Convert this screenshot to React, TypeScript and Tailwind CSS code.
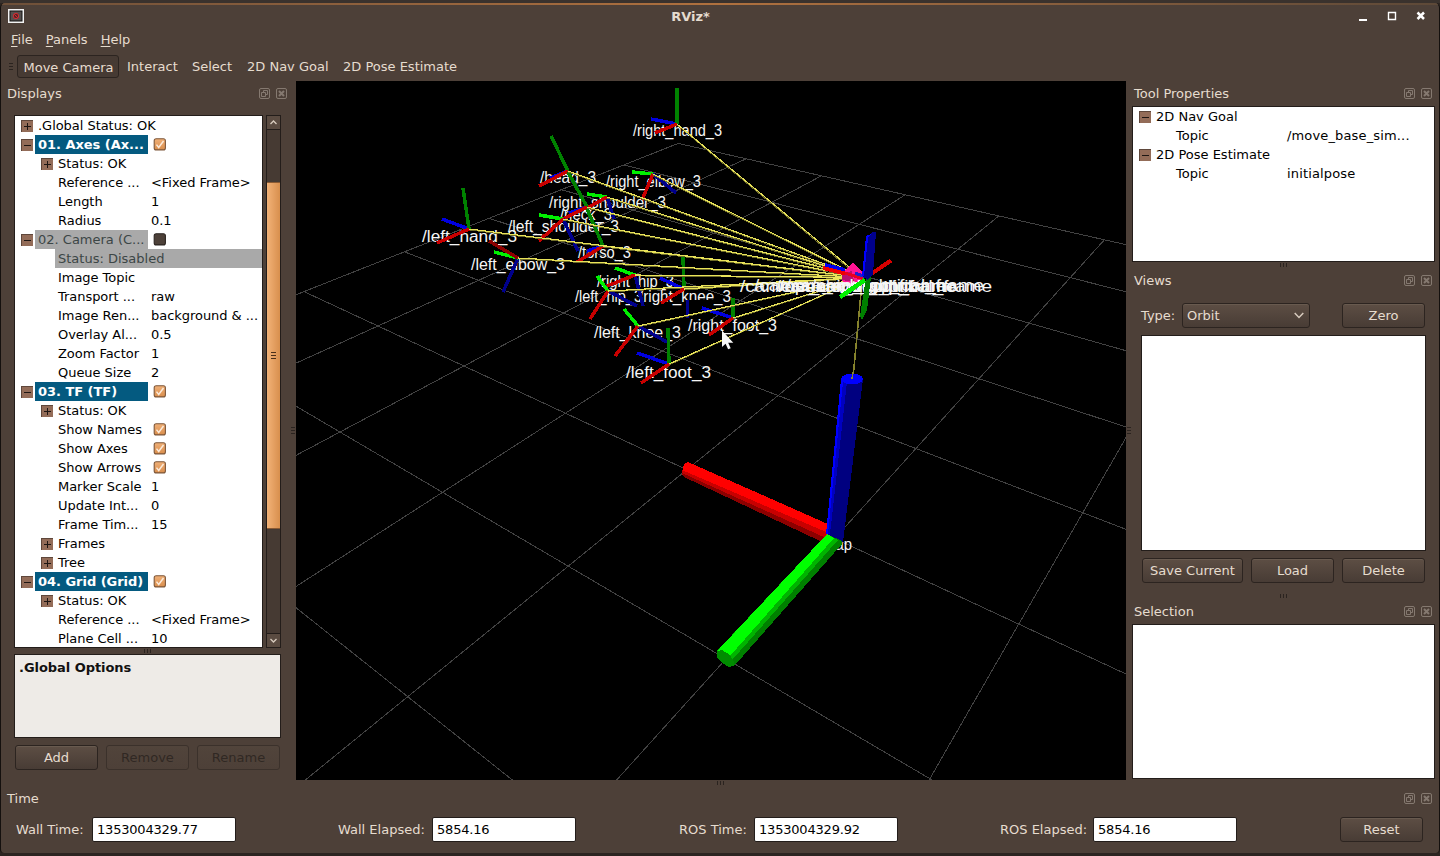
import React from "react";

type Pt = [number, number];

/* ---------- small widgets ---------- */

function Expander({ open }: { open: boolean }) {
  return (
    <svg width="12" height="12" viewBox="0 0 12 12" className="shrink-0" shapeRendering="crispEdges">
      <rect width="12" height="12" fill="#5f473b" />
      <rect x="1" y="1" width="11" height="11" fill="#936c58" />
      <rect x="3" y="6" width="7" height="1" fill="#1d1512" />
      {!open && <rect x="6" y="3" width="1" height="7" fill="#1d1512" />}
    </svg>
  );
}

function Check({ on }: { on: boolean }) {
  return (
    <svg width="13" height="13" viewBox="0 0 13 13" className="ml-[5px] shrink-0">
      <defs>
        <linearGradient id="chk" x1="0" y1="0" x2="0" y2="1">
          <stop offset="0" stopColor="#f0b078" />
          <stop offset="1" stopColor="#d98e4c" />
        </linearGradient>
      </defs>
      <rect x="1.2" y="0.7" width="11.2" height="11.2" rx="2" fill={on ? "url(#chk)" : "#4d4139"} stroke={on ? "#7d573a" : "#2b2420"} strokeWidth="1.1" />
      {on && <path d="M3.5 6.6 5.7 9.4 10.5 3" fill="none" stroke="#fbeada" strokeWidth="1.5" />}
    </svg>
  );
}

function DockButtons() {
  return (
    <svg width="28" height="11" viewBox="0 0 28 11" fill="none" stroke="#857970" strokeWidth="1">
      <rect x="0.5" y="0.5" width="10" height="10" rx="1.5" />
      <path d="M4.5 4.5V2.5H8.5V6.5H6.5M2.5 4.5H6.5V8.5H2.5Z" />
      <rect x="17.5" y="0.5" width="10" height="10" rx="1.5" />
      <path d="M20 3l5 5M25 3l-5 5" strokeWidth="2" />
    </svg>
  );
}

function DockTitle({ text }: { text: string }) {
  return (
    <div className="flex h-[25px] shrink-0 items-center justify-between">
      <span>{text}</span>
      <DockButtons />
    </div>
  );
}

function Grip({ vertical = false }: { vertical?: boolean }) {
  return (
    <svg width={vertical ? 4 : 7} height={vertical ? 7 : 4} className="shrink-0" fill="#2a231f" shapeRendering="crispEdges">
      {[0, 3, 6].map((n) =>
        vertical ? <rect key={n} x="0" y={n} width="4" height="1" /> : <rect key={n} x={n} y="0" width="1" height="4" />
      )}
    </svg>
  );
}

function Button({ label, width = "w-[83px]", disabled = false }: { label: string; width?: string; disabled?: boolean }) {
  const look = disabled
    ? "border-[#3b312b] text-[#302823] from-[#51443b] to-[#4d4038]"
    : "border-[#2c2420] text-[#e6dccf] from-[#5d4e44] to-[#483c35] shadow-[inset_0_1px_0_#685a4f]";
  return (
    <button className={`${width} ${look} flex h-[25px] shrink-0 items-center justify-center rounded-[3px] border bg-gradient-to-b`}>
      {label}
    </button>
  );
}

/* ---------- displays tree ---------- */

type Row = {
  name: string;
  level?: number;
  mark?: "+" | "-";
  value?: string;
  check?: boolean;
  look?: "head" | "off" | "offRow";
};

const rows: Row[] = [
  { name: ".Global Status: OK", mark: "+" },
  { name: "01. Axes (Ax...", mark: "-", look: "head", check: true },
  { name: "Status: OK", level: 1, mark: "+" },
  { name: "Reference ...", level: 1, value: "<Fixed Frame>" },
  { name: "Length", level: 1, value: "1" },
  { name: "Radius", level: 1, value: "0.1" },
  { name: "02. Camera (C...", mark: "-", look: "off", check: false },
  { name: "Status: Disabled", level: 1, look: "offRow" },
  { name: "Image Topic", level: 1 },
  { name: "Transport ...", level: 1, value: "raw" },
  { name: "Image Ren...", level: 1, value: "background & ..." },
  { name: "Overlay Al...", level: 1, value: "0.5" },
  { name: "Zoom Factor", level: 1, value: "1" },
  { name: "Queue Size", level: 1, value: "2" },
  { name: "03. TF (TF)", mark: "-", look: "head", check: true },
  { name: "Status: OK", level: 1, mark: "+" },
  { name: "Show Names", level: 1, check: true },
  { name: "Show Axes", level: 1, check: true },
  { name: "Show Arrows", level: 1, check: true },
  { name: "Marker Scale", level: 1, value: "1" },
  { name: "Update Int...", level: 1, value: "0" },
  { name: "Frame Tim...", level: 1, value: "15" },
  { name: "Frames", level: 1, mark: "+" },
  { name: "Tree", level: 1, mark: "+" },
  { name: "04. Grid (Grid)", mark: "-", look: "head", check: true },
  { name: "Status: OK", level: 1, mark: "+" },
  { name: "Reference ...", level: 1, value: "<Fixed Frame>" },
  { name: "Plane Cell ...", level: 1, value: "10" },
];

function TreeRow({ row }: { row: Row }) {
  const cell =
    row.look === "head"
      ? "bg-[#045a80] font-bold text-white tracking-[-0.03px]"
      : row.look === "off"
        ? "bg-[#a9a9a9] text-[#3c4646]"
        : row.look === "offRow"
          ? "bg-[#a9a9a9] text-[#3c4646] grow"
          : "tracking-[-0.04px]";
  return (
    <div className={`${row.level ? "pl-[26px]" : "pl-[6px]"} flex h-[19px] shrink-0 items-center`}>
      <span className="mt-px flex w-[14px] shrink-0">{row.mark && <Expander open={row.mark === "-"} />}</span>
      <span className={`${cell} ${row.level ? "min-w-[93px]" : "min-w-[113px]"} flex h-full shrink-0 items-center whitespace-nowrap pl-[3px]`}>
        {row.name}
      </span>
      {row.value && <span className="whitespace-nowrap pl-[3px] tracking-[-0.04px]">{row.value}</span>}
      {row.check !== undefined && <Check on={row.check} />}
    </div>
  );
}

function Scrollbar() {
  return (
    <div className="flex w-[15px] shrink-0 flex-col border border-[#231d1a] bg-[#463a33]">
      <div className="flex h-[14px] items-center justify-center border-b border-[#231d1a] bg-[#5a4b41]">
        <svg width="7" height="5" fill="none" stroke="#d8ccbf" strokeWidth="1.3"><path d="M0.5 4 3.5 1 6.5 4" /></svg>
      </div>
      <div className="h-[52px]" />
      <div className="flex h-[347px] items-center justify-center border-y border-[#8a5a33] bg-gradient-to-r from-[#f2b277] to-[#d88f4d]">
        <svg width="5" height="7" fill="#4a2f1a" shapeRendering="crispEdges">
          <rect width="5" height="1" /><rect y="3" width="5" height="1" /><rect y="6" width="5" height="1" />
        </svg>
      </div>
      <div className="grow" />
      <div className="flex h-[14px] items-center justify-center border-t border-[#231d1a] bg-[#5a4b41]">
        <svg width="7" height="5" fill="none" stroke="#d8ccbf" strokeWidth="1.3"><path d="M0.5 1 3.5 4 6.5 1" /></svg>
      </div>
    </div>
  );
}

function DisplaysPanel() {
  return (
    <div className="flex w-[296px] shrink-0">
      <div className="flex w-[288px] flex-col">
        <div className="pl-[7px] pr-px"><DockTitle text="Displays" /></div>
        <div className="ml-[14px] mt-[9px] flex h-[533px] gap-[3px]">
          <div className="flex w-[249px] shrink-0 flex-col overflow-hidden border border-[#231d1a] bg-white text-black">
            {rows.map((r, i) => <TreeRow key={i} row={r} />)}
          </div>
          <Scrollbar />
        </div>
        <div className="flex h-[6px] items-center justify-center pl-[7px]"><Grip /></div>
        <div className="ml-[14px] h-[84px] w-[267px] border border-[#231d1a] bg-[#eeebe7] px-[4px] py-[3px] font-bold tracking-[-0.05px] text-[#111]">.Global Options</div>
        <div className="ml-[15px] mt-[7px] flex gap-2">
          <Button label="Add" />
          <Button label="Remove" disabled />
          <Button label="Rename" disabled />
        </div>
      </div>
      <div className="flex grow items-center justify-center pl-[2px]"><Grip vertical /></div>
    </div>
  );
}

/* ---------- 3D scene ---------- */

/* Ground-plane projection: (u, v) in grid cells measured from the far corner. */
const quad: Pt[] = [[678.2, 143.4], [1104.4, 239.8], [834.7, 538.5], [304, 291.6]];

function buildGrid() {
  const [[x0, y0], [x1, y1], [x2, y2], [x3, y3]] = quad;
  const dx1 = x1 - x2, dy1 = y1 - y2, dx2 = x3 - x2, dy2 = y3 - y2;
  const sx = x0 - x1 + x2 - x3, sy = y0 - y1 + y2 - y3;
  const det = dx1 * dy2 - dx2 * dy1;
  const g = (sx * dy2 - dx2 * sy) / det;
  const h = (dx1 * sy - sx * dy1) / det;
  const at = (u: number, v: number): Pt => {
    const s = u / 5, t = v / 5, w = 1 + g * s + h * t;
    return [
      ((x1 - x0 + g * x1) * s + (x3 - x0 + h * x3) * t + x0) / w,
      ((y1 - y0 + g * y1) * s + (y3 - y0 + h * y3) * t + y0) / w,
    ];
  };
  const near = 0.12;
  const out: [Pt, Pt][] = [];
  for (let n = 0; n <= 10; n++) {
    const vMax = Math.min(10, ((near - 1 - (g * n) / 5) / h) * 5);
    const uMax = Math.min(10, ((near - 1 - (h * n) / 5) / g) * 5);
    out.push([at(n, 0), at(n, vMax)], [at(0, n), at(uMax, n)]);
  }
  return out;
}

const gridLines = buildGrid();

type Frame = { o: Pt; r?: Pt; g?: Pt; b?: Pt };

const frames: Frame[] = [
  { o: [677, 124], g: [677, 88], b: [651, 119], r: [655, 133] },
  { o: [568, 171], g: [551, 136], b: [550, 178], r: [539, 186] },
  { o: [653, 174], g: [632, 172], b: [676, 193], r: [642, 200] },
  { o: [607, 197], g: [587, 194], b: [614, 219], r: [587, 208] },
  { o: [587, 207], g: [568, 172], b: [569, 213], r: [563, 219] },
  { o: [563, 219], g: [539, 215], b: [578, 251], r: [539, 241] },
  { o: [469, 229], g: [463, 188], b: [442, 219], r: [437, 243] },
  { o: [518, 258], g: [494, 252], b: [503, 292], r: [489, 241] },
  { o: [603, 246], g: [587, 209], b: [587, 251], r: [577, 262] },
  { o: [635, 275], g: [615, 268], b: [643, 306], r: [607, 286] },
  { o: [608, 291], g: [597, 276], b: [637, 306], r: [590, 319] },
  { o: [684, 289], g: [683, 257], b: [660, 278], r: [661, 303] },
  { o: [638, 326], g: [624, 309], b: [667, 342], r: [615, 356] },
  { o: [733, 318], g: [733, 298], b: [702, 308], r: [709, 335] },
  { o: [669, 364], g: [668, 328], b: [637, 353], r: [641, 383] },
];

const labels: [string, number, number, number][] = [
  ["/right_hand_3", 633, 136, 89],
  ["/head_3", 540, 183, 56],
  ["/right_elbow_3", 606, 187, 95],
  ["/right_shoulder_3", 549, 208, 117],
  ["/neck_3", 560, 220, 52],
  ["/left_shoulder_3", 508, 232, 111],
  ["/left_hand_3", 422, 242, 95],
  ["/left_elbow_3", 471, 270, 94],
  ["/torso_3", 578, 258, 53],
  ["/right_hip_3", 597, 287, 77],
  ["/left_hip_3", 575, 302, 67],
  ["/right_knee_3", 639, 302, 92],
  ["/left_knee_3", 594, 338, 87],
  ["/right_foot_3", 688, 331, 89],
  ["/left_foot_3", 626, 378, 85],
];

const sensorLabels: [string, number, number, number][] = [
  ["/camera_depth_optical_frame", 740, 292, 252],
  ["/camera_rgb_optical_frame", 754, 291, 230],
  ["/camera_depth_frame", 776, 292, 180],
  ["/camera_rgb_frame", 786, 291, 160],
  ["/openni_depth_frame", 779, 292, 178],
  ["/camera_link", 811, 292, 106],
];

const GREENS_BRIGHT = new Set([2, 3, 5, 7, 9, 10, 12]);
const BLUES_DARK = new Set([2, 3, 5, 7, 9, 10, 12]);

function Seg({ a, b, c, w = 4 }: { a: Pt; b: Pt; c: string; w?: number }) {
  return <line x1={a[0]} y1={a[1]} x2={b[0]} y2={b[1]} stroke={c} strokeWidth={w} />;
}

function Labels({ items, size }: { items: [string, number, number, number][]; size: number }) {
  return (
    <g fill="#f6f6f6" fontSize={size} className="font-['Liberation_Sans',Arial,sans-serif]">
      {items.map(([t, x, y, w]) => (
        <text key={t} x={x} y={y} textLength={w} lengthAdjust="spacingAndGlyphs">{t}</text>
      ))}
    </g>
  );
}

function Scene() {
  return (
    <svg width="830" height="699" viewBox="296 81 830 699" className="block shrink-0 bg-black">
      <g shapeRendering="crispEdges">
        {gridLines.map(([a, b], i) => <Seg key={i} a={a} b={b} c="#424242" w={1} />)}
      </g>
      <Labels items={labels} size={16} />
      <Labels items={[["/map", 819, 550, 33]]} size={16} />
      <rect x="687" y="300" width="27" height="3" fill="#000" />
      <g shapeRendering="crispEdges">
        {frames.map((f, i) => (
          <g key={i}>
            {f.b && <Seg a={f.o} b={f.b} c={BLUES_DARK.has(i) ? "#00008c" : "#0000e0"} w={3.5} />}
            {f.g && <Seg a={f.o} b={f.g} c={GREENS_BRIGHT.has(i) ? "#00f000" : "#008200"} w={3.5} />}
            {f.r && <Seg a={f.o} b={f.r} c={i === 7 ? "#8c0000" : "#c80000"} w={3.5} />}
          </g>
        ))}
        <Seg a={[688, 300]} b={[687, 318]} c="#00008c" w={3} />
        {frames.map((f, i) => (
          <Seg key={i} a={[f.o[0], f.o[1] + 0.9]} b={[861, 278.4]} c="#6f6c28" w={1} />
        ))}
        {frames.map((f, i) => <Seg key={i} a={f.o} b={[862, 277.5]} c="#e9e35a" w={1.1} />)}
        <Seg a={[862, 282]} b={[853, 378]} c="#85822c" w={1.6} />

        {/* sensor arrow tip */}
        <polygon points="842,273 853,263 863,273 864,281 858,284 850,287 842,281" fill="#ff1493" />
        <polygon points="842,273 852,271 854,282 842,280" fill="#b80f70" />
      </g>
      <Labels items={sensorLabels} size={17} />
      <g shapeRendering="crispEdges">
        {/* sensor frame axes */}
        <polygon points="867,277 871,277 867,310 862,320 860,316 865,284" fill="#008000" />
        <Seg a={[825, 265]} b={[845, 270]} c="#0000f0" w={4} />
        <Seg a={[823, 268]} b={[845, 273.5]} c="#f00000" w={4} />
        <Seg a={[845, 273]} b={[864, 279]} c="#e80020" w={3} />
        <Seg a={[855, 273]} b={[866, 277]} c="#2020d0" w={3} />
        <Seg a={[871, 274]} b={[891, 260.5]} c="#d80000" w={4} />
        <polygon points="866,236 871,234 872,232 876,232 873,274 868,280 862,276" fill="#00008c" />
        <polygon points="866,236 871,234 868,238 864,276 862,276" fill="#0000ff" />
        <Seg a={[865, 280]} b={[840, 297]} c="#00f000" w={4.5} />

        {/* fixed frame axes */}
        <polygon points="682,472 684,464 688,462 830,525 828,541 820,541 682,475" fill="#ff0000" />
        <polygon points="682,470 826,532 828,544 820,541 682,475" fill="#c80000" />
        <polygon points="682,473 826,538 828,544 820,541 684,477" fill="#8c0000" />
        <polygon points="841,379 863,379 843,542 826,534" fill="#000080" />
        <polygon points="841,379 847,382 830,534 826,534" fill="#0000c0" />
        <polygon points="841,379 843,382 828,534 826,534" fill="#0000ff" />
        <ellipse cx="852" cy="379" rx="11" ry="5.5" fill="#0000ff" />
        <Seg a={[853, 372]} b={[852, 379]} c="#85822c" w={1.6} />
        <polygon points="717,651 827,534 842,541 842,544 735,665 729,667 722,663" fill="#008000" />
        <polygon points="717,651 827,534 838,540 733,659" fill="#00b400" />
        <polygon points="717,651 720,648 827,534 834,538 730,656 722,650" fill="#00ff00" />
        <polygon points="717,651 722,650 730,655 733,660 735,665 729,667 722,663 717,657" fill="#008c00" />
      </g>
      <path d="M722 330.5v16.5l3.6-3.3 2.5 5.6 2.6-1.1-2.5-5.4h5.1z" fill="#f8f8f8" />
    </svg>
  );
}

/* ---------- right column ---------- */

function ToolRow({ name, value, open }: { name: string; value?: string; open?: boolean }) {
  return (
    <div className="flex h-[19px] items-center pl-[6px]">
      {open && <span className="mt-px flex"><Expander open /></span>}
      <span className={`${open ? "pl-[5px]" : "w-[148px] pl-[37px]"} shrink-0 whitespace-nowrap`}>{name}</span>
      {value && <span className="tracking-[0.15px]">{value}</span>}
    </div>
  );
}

function RightColumn() {
  return (
    <div className="flex w-[314px] shrink-0 pr-[5px]">
      <div className="flex w-[6px] shrink-0 items-center justify-center"><Grip vertical /></div>
      <div className="flex w-[303px] flex-col">
        <div className="pl-[2px] pr-[3px]"><DockTitle text="Tool Properties" /></div>
        <div className="h-[156px] shrink-0 border border-[#231d1a] bg-white text-black">
          <ToolRow name="2D Nav Goal" open />
          <ToolRow name="Topic" value="/move_base_sim..." />
          <ToolRow name="2D Pose Estimate" open />
          <ToolRow name="Topic" value="initialpose" />
        </div>
        <div className="flex h-[6px] shrink-0 items-center justify-center"><Grip /></div>
        <div className="pl-[2px] pr-[3px]"><DockTitle text="Views" /></div>
        <div className="mt-[10px] flex h-[25px] shrink-0 items-center pl-[9px]">
          <span className="w-[41px]">Type:</span>
          <div className="flex h-[25px] w-[128px] items-center justify-between rounded-[3px] border border-[#2c2420] bg-gradient-to-b from-[#5d4e44] to-[#483c35] pl-1 pr-[5px] shadow-[inset_0_1px_0_#685a4f]">
            Orbit
            <svg width="10" height="7" fill="none" stroke="#d8ccbf" strokeWidth="1.5"><path d="M0.7 1 5 5.4 9.3 1" /></svg>
          </div>
          <div className="ml-[32px]"><Button label="Zero" /></div>
        </div>
        <div className="ml-[9px] mt-[7px] h-[216px] w-[285px] shrink-0 border border-[#231d1a] bg-white" />
        <div className="ml-[10px] mt-[7px] flex gap-2">
          <Button label="Save Current" width="w-[101px]" />
          <Button label="Load" />
          <Button label="Delete" />
        </div>
        <div className="mt-[10px] flex h-[6px] shrink-0 items-center justify-center"><Grip /></div>
        <div className="pl-[2px] pr-[3px]"><DockTitle text="Selection" /></div>
        <div className="h-[155px] shrink-0 border border-[#231d1a] bg-white" />
      </div>
    </div>
  );
}

/* ---------- time bar ---------- */

function TimeField({ label, value, width }: { label: string; value: string; width: string }) {
  return (
    <div className={`${width} flex shrink-0 items-center justify-between`}>
      <span className="whitespace-nowrap">{label}</span>
      <div className="flex h-[25px] w-[144px] items-center rounded-[2px] border border-[#231d1a] bg-white pl-1 tracking-[-0.2px] text-black">{value}</div>
    </div>
  );
}

function Mnemonic({ text }: { text: string }) {
  return (
    <span>
      <span className="underline underline-offset-2">{text[0]}</span>
      {text.slice(1)}
    </span>
  );
}

export default function App() {
  return (
    <div className="flex h-[856px] w-[1440px] flex-col overflow-hidden bg-[#2c2521] font-['DejaVu_Sans',sans-serif] text-[13px] leading-[19px] text-[#e6dccf]">
      <div className="h-[3px] shrink-0 bg-[#3a322d]" />
      <div className="flex h-[850px] shrink-0 flex-col overflow-hidden rounded-t-[5px] rounded-b-[4px] border-x border-[#14100e] bg-[#4d4038]">
        <div className="h-[2px] shrink-0 bg-gradient-to-r from-[#6e5039] via-[#b0713e] to-[#5d4938]" />
        <div className="flex h-[22px] shrink-0 items-center pl-[7px] pr-[14px]">
          <svg width="16" height="14" viewBox="0 0 16 14">
            <rect x="0.75" y="0.75" width="14.5" height="12.5" fill="#111" stroke="#f2f2f2" strokeWidth="1.5" />
            <rect x="2.5" y="2.5" width="11" height="9" fill="#55504e" />
            <circle cx="8" cy="7" r="2.7" fill="#5a2424" stroke="#d02c34" />
            <path d="M6.2 5.2 9.8 8.8" stroke="#d02c34" />
          </svg>
          <div className="grow pr-[2px] text-center font-bold">RViz*</div>
          <svg width="66" height="12" viewBox="0 0 66 12" fill="none" stroke="#fff">
            <path d="M0 10H8" strokeWidth="2" />
            <path d="M29.5 2.5h7v7h-7zM29 2.5h8" strokeWidth="1.4" />
            <path d="M58.5 2.5 65 9M65 2.5 58.5 9" strokeWidth="2.5" />
          </svg>
        </div>
        <div className="flex h-[24px] shrink-0 items-center gap-[13px] pl-[10px]">
          <Mnemonic text="File" />
          <Mnemonic text="Panels" />
          <Mnemonic text="Help" />
        </div>
        <div className="flex h-[30px] shrink-0 items-center pl-[8px]">
          <Grip vertical />
          <div className="ml-1 mt-px flex h-[23px] w-[102px] items-center justify-center rounded-[3px] border border-[#2c2420] bg-[#463a33] pl-px pt-[2px]">Move Camera</div>
          <span className="ml-[8px] w-[65px]">Interact</span>
          <span className="w-[55px]">Select</span>
          <span className="w-[96px]">2D Nav Goal</span>
          <span>2D Pose Estimate</span>
        </div>
        <div className="-mx-px flex h-[699px] shrink-0">
          <DisplaysPanel />
          <Scene />
          <RightColumn />
        </div>
        <div className="flex h-[6px] shrink-0 items-center justify-center"><Grip /></div>
        <div className="pl-[6px] pr-[7px]"><DockTitle text="Time" /></div>
        <div className="mt-[6px] flex h-[25px] shrink-0 items-center pl-[15px]">
          <TimeField label="Wall Time:" value="1353004329.77" width="w-[220px]" />
          <div className="w-[102px] shrink-0" />
          <TimeField label="Wall Elapsed:" value="5854.16" width="w-[238px]" />
          <div className="w-[103px] shrink-0" />
          <TimeField label="ROS Time:" value="1353004329.92" width="w-[219px]" />
          <div className="w-[102px] shrink-0" />
          <TimeField label="ROS Elapsed:" value="5854.16" width="w-[237px]" />
          <div className="w-[103px] shrink-0" />
          <Button label="Reset" />
        </div>
      </div>
    </div>
  );
}
